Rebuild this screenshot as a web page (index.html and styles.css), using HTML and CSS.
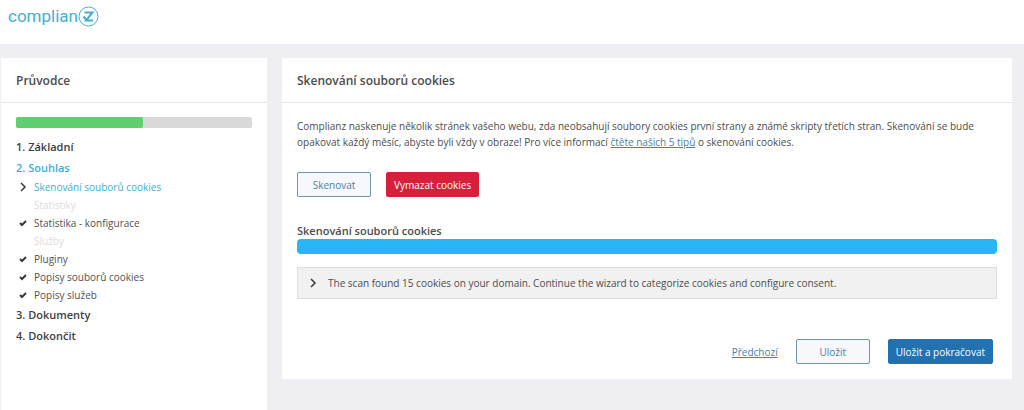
FILE: index.html
```html
<!DOCTYPE html>
<html lang="cs">
<head>
    <meta charset="UTF-8">
    <meta name="viewport" content="width=device-width, initial-scale=1.0">
    <title>Complianz - Průvodce</title>
    <link rel="stylesheet" href="styles.css">
</head>
<body>

    <header class="topbar">
        <div class="logo">
            <span>complian</span>
            <svg width="21" height="21" viewBox="0 0 21 21" fill="none" stroke="currentColor" role="img" aria-label="z">
                <circle cx="10.5" cy="10.5" r="9.5" stroke-width="1"/>
                <path d="M6.5 6.5h8L8 14.5h7" stroke-width="2"/>
                <path d="M5.5 10.5l3 3.5" stroke-width="2"/>
            </svg>
        </div>
    </header>

    <div class="layout">
        <aside class="card sidebar">
            <h2 class="card-title">Průvodce</h2>
            <div class="sidebar-body">
                <div class="progress"><div class="progress-bar" style="width: 54%"></div></div>
                <nav class="menu">
                    <a href="#" class="step">1. Základní</a>
                    <a href="#" class="step active">2. Souhlas</a>
                    <ul class="substeps">
                        <li class="active">
                            <svg class="icon arrow" viewBox="0 0 14 14"><path d="M5 3l4 4-4 4"/></svg>
                            <a href="#">Skenování souborů cookies</a>
                        </li>
                        <li class="disabled"><span class="icon"></span>Statistiky</li>
                        <li>
                            <svg class="icon" viewBox="0 0 14 14"><path d="M4 7l2 2 4-4"/></svg>
                            <a href="#">Statistika - konfigurace</a>
                        </li>
                        <li class="disabled"><span class="icon"></span>Služby</li>
                        <li>
                            <svg class="icon" viewBox="0 0 14 14"><path d="M4 7l2 2 4-4"/></svg>
                            <a href="#">Pluginy</a>
                        </li>
                        <li>
                            <svg class="icon" viewBox="0 0 14 14"><path d="M4 7l2 2 4-4"/></svg>
                            <a href="#">Popisy souborů cookies</a>
                        </li>
                        <li>
                            <svg class="icon" viewBox="0 0 14 14"><path d="M4 7l2 2 4-4"/></svg>
                            <a href="#">Popisy služeb</a>
                        </li>
                    </ul>
                    <a href="#" class="step">3. Dokumenty</a>
                    <a href="#" class="step">4. Dokončit</a>
                </nav>
            </div>
        </aside>

        <main class="card content">
            <h1 class="card-title">Skenování souborů cookies</h1>
            <div class="content-body">
                <p class="intro">Complianz naskenuje několik stránek vašeho webu, zda neobsahují soubory cookies první strany a známé skripty třetích stran. Skenování se bude opakovat každý měsíc, abyste byli vždy v obraze! Pro více informací <a href="#">čtěte našich 5 tipů</a> o skenování cookies.</p>
                <div class="actions">
                    <button type="button" class="btn">Skenovat</button>
                    <button type="button" class="btn btn-red">Vymazat cookies</button>
                </div>
                <h3 class="scan-label">Skenování souborů cookies</h3>
                <div class="scan-bar"></div>
                <button type="button" class="result">
                    <svg class="icon arrow" viewBox="0 0 14 14"><path d="M5 3l4 4-4 4"/></svg>
                    <span>The scan found 15 cookies on your domain. Continue the wizard to categorize cookies and configure consent.</span>
                </button>
                <div class="footer-actions">
                    <a href="#">Předchozí</a>
                    <button type="button" class="btn">Uložit</button>
                    <button type="button" class="btn btn-blue">Uložit a pokračovat</button>
                </div>
            </div>
        </main>
    </div>

</body>
</html>
```

FILE: styles.css
```css
* {
    box-sizing: border-box;
}
body {
    margin: 0;
    min-height: 100vh;
    display: flex;
    flex-direction: column;
    background-color: #eeeef3;
    color: #4c4c4c;
    font-family: "Open Sans", "Noto Sans", sans-serif;
    font-size: 10px;
    line-height: 16px;
}
a {
    color: #4780a8;
}
.topbar {
    background-color: #fff;
    height: 44px;
    padding: 6px 8px;
}
.logo {
    display: flex;
    align-items: center;
    color: #45afd0;
    font-family: Roboto, sans-serif;
    font-size: 17px;
    line-height: 21px;
}
.layout {
    flex: 1;
    display: flex;
    align-items: flex-start;
    gap: 15px;
    padding: 14px 12px 0 1px;
}
.card {
    background-color: #fff;
}
.card-title {
    margin: 0;
    padding: 13px 15px 11px;
    border-bottom: 1px solid #e6e6ea;
    font-size: 12px;
    font-weight: 600;
    line-height: 20px;
}
.sidebar {
    width: 266px;
    flex-shrink: 0;
    align-self: stretch;
}
.sidebar-body {
    padding: 14px 15px;
}
.progress {
    height: 11px;
    background-color: #d9d9d9;
    border-radius: 2px;
}
.progress-bar {
    height: 11px;
    background-color: #61ce70;
    border-radius: 2px;
}
.menu {
    padding-top: 8px;
}
.step {
    display: block;
    color: #404040;
    font-size: 11px;
    font-weight: 600;
    line-height: 21px;
    text-decoration: none;
}
.step.active {
    color: #35aedb;
}
.substeps {
    list-style: none;
    margin: 0;
    padding: 0;
}
.substeps li {
    display: flex;
    align-items: center;
    gap: 4px;
    line-height: 18px;
}
.substeps a {
    color: #505050;
    text-decoration: none;
}
.substeps .active a {
    color: #42afcf;
}
.substeps .disabled {
    color: #dcdcdc;
}
.icon {
    width: 14px;
    height: 14px;
    flex-shrink: 0;
    fill: none;
    stroke: #3a3a3a;
    stroke-width: 2;
}
.arrow {
    stroke-width: 1.5;
}
.content {
    flex: 1;
}
.content-body {
    padding: 15px;
}
.intro {
    margin: 0;
}
.actions {
    display: flex;
    gap: 15px;
    padding: 22px 0 26px;
}
.btn {
    min-width: 74px;
    height: 25px;
    padding: 0 7px;
    background-color: #f6f8fb;
    border: 1px solid #6f94ae;
    border-radius: 2px;
    color: #4d7f9f;
    font: inherit;
    cursor: pointer;
}
.btn-red {
    background-color: #d7203c;
    border-color: #d7203c;
    color: #fff;
}
.btn-blue {
    background-color: #2271b1;
    border-color: #2271b1;
    color: #fff;
}
.scan-label {
    margin: 0;
    font-size: 11px;
    font-weight: 600;
    line-height: 16px;
}
.scan-bar {
    height: 15px;
    background-color: #29b6f6;
    border-radius: 4px;
}
.result {
    display: flex;
    align-items: center;
    gap: 8px;
    width: 100%;
    height: 32px;
    margin-top: 13px;
    padding: 0 8px;
    background-color: #f1f1f1;
    border: 1px solid #dedede;
    color: inherit;
    font: inherit;
    cursor: pointer;
}
.footer-actions {
    display: flex;
    align-items: center;
    justify-content: flex-end;
    gap: 18px;
    padding: 40px 4px 0 0;
}
```
